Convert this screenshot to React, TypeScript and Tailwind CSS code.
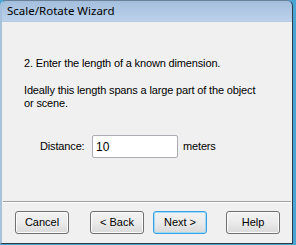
import React from 'react';

function WinButton({ label, primary }: { label: string; primary?: boolean }) {
  return (
    <button
      className={
        'w-[54px] h-[23px] rounded-[3px] border text-[11px] text-black bg-gradient-to-b from-[#f2f2f2] via-[#ebebeb] to-[#d9d9d9] ' +
        (primary ? 'border-[#3c9fe0] shadow-[inset_0_0_0_1px_#9ddcf9]' : 'border-[#707070] shadow-[inset_0_0_0_1px_#fbfbfb]')
      }
    >
      {label}
    </button>
  );
}

export default function App() {
  return (
    <div className="w-[296px] h-[245px] bg-[#49a6d3] font-['Liberation_Sans',Arial,sans-serif]">
      <div className="w-[293px] h-[244px] flex flex-col rounded-t-[6px] overflow-hidden border-l-2 border-r border-b border-l-[#a7c0dc] border-r-[#2d3b4a] border-b-[#2d3b4a] border-t border-t-[#6a7f98]">
        {/* Title bar */}
        <div className="h-[21px] flex items-center pl-[5px] bg-gradient-to-b from-[#a3bedd] to-[#bcd1ea] border-b border-[#b7cce4]">
          <span className="text-[11.5px] text-black font-['Noto_Sans',sans-serif] leading-none">Scale/Rotate Wizard</span>
        </div>

        {/* Body */}
        <div className="flex-1 flex flex-col bg-[#f0f0f0] text-[11px] text-black leading-[13px] tracking-[-0.15px]">
          <div className="pl-[22px] pt-[35px]">
            <p>2. Enter the length of a known dimension.</p>
            <p className="mt-[14px] w-[240px]">Ideally this length spans a large part of the object or scene.</p>
          </div>

          <div className="flex items-center mt-[25px] pl-[38px]">
            <span className="w-[52px]">Distance:</span>
            <input
              defaultValue="10"
              className="w-[86px] h-[23px] px-[3px] bg-white border border-[#abadb3] rounded-[2px] outline-none text-[12px] tracking-normal"
            />
            <span className="ml-[5px]">meters</span>
          </div>

          <div className="mt-[43px] mx-[1px] border-t border-[#a0a0a0] border-b border-b-white" />

          <div className="flex pt-[8px] pl-[13px] tracking-normal">
            <WinButton label="Cancel" />
            <div className="ml-[21px]"><WinButton label="< Back" /></div>
            <div className="ml-[9px]"><WinButton label="Next >" primary /></div>
            <div className="ml-[19px]"><WinButton label="Help" /></div>
          </div>
        </div>
      </div>
    </div>
  );
}
